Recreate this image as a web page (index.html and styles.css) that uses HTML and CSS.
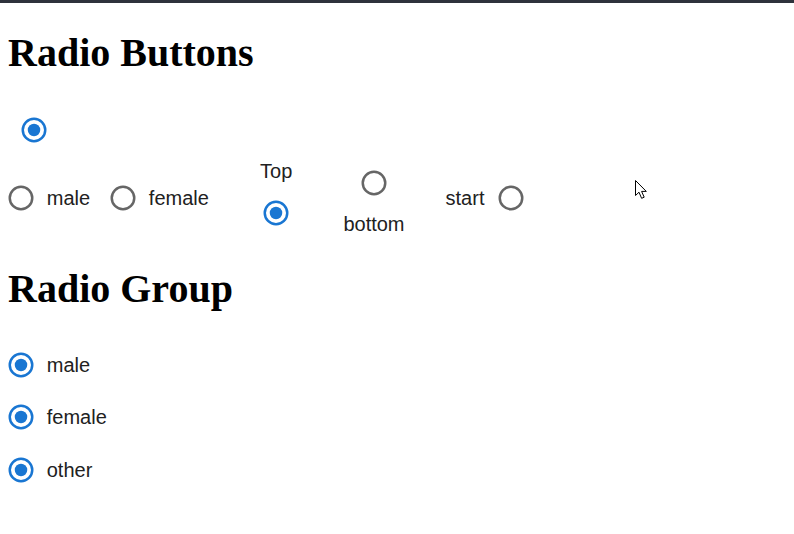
FILE: index.html
```html
<!DOCTYPE html>
<html lang="en">
<head>
<meta charset="utf-8">
<title>Radio Buttons</title>
<link rel="stylesheet" href="styles.css">
</head>
<body>
<h1 class="title">Radio Buttons</h1>
<div class="solo">
  <span class="radio checked"><svg viewBox="0 0 24 24"><circle class="ring" cx="12" cy="12" r="9"/><circle class="dot" cx="12" cy="12" r="5"/></svg></span>
</div>
<div class="group row">
  <label class="fcl"><span class="radio"><svg viewBox="0 0 24 24"><circle class="ring" cx="12" cy="12" r="9"/></svg></span><span class="lbl">male</span></label>
  <label class="fcl"><span class="radio"><svg viewBox="0 0 24 24"><circle class="ring" cx="12" cy="12" r="9"/></svg></span><span class="lbl">female</span></label>
  <label class="fcl top"><span class="radio checked"><svg viewBox="0 0 24 24"><circle class="ring" cx="12" cy="12" r="9"/><circle class="dot" cx="12" cy="12" r="5"/></svg></span><span class="lbl">Top</span></label>
  <label class="fcl bottom"><span class="radio"><svg viewBox="0 0 24 24"><circle class="ring" cx="12" cy="12" r="9"/></svg></span><span class="lbl">bottom</span></label>
  <label class="fcl start"><span class="radio"><svg viewBox="0 0 24 24"><circle class="ring" cx="12" cy="12" r="9"/></svg></span><span class="lbl">start</span></label>
</div>
<h1 class="title">Radio Group</h1>
<div class="group col">
  <label class="fcl"><span class="radio checked"><svg viewBox="0 0 24 24"><circle class="ring" cx="12" cy="12" r="9"/><circle class="dot" cx="12" cy="12" r="5"/></svg></span><span class="lbl">male</span></label>
  <label class="fcl"><span class="radio checked"><svg viewBox="0 0 24 24"><circle class="ring" cx="12" cy="12" r="9"/><circle class="dot" cx="12" cy="12" r="5"/></svg></span><span class="lbl">female</span></label>
  <label class="fcl"><span class="radio checked"><svg viewBox="0 0 24 24"><circle class="ring" cx="12" cy="12" r="9"/><circle class="dot" cx="12" cy="12" r="5"/></svg></span><span class="lbl">other</span></label>
</div>
<svg class="cursor" viewBox="0 0 13 20" width="13" height="20"><path d="M0.5 0.5 L0.5 15.5 L4 12.2 L6.6 18.3 L9.2 17.2 L6.6 11.4 L11.3 11.4 Z" fill="#fff" stroke="#000" stroke-width="1" stroke-linejoin="miter"/></svg>
</body>
</html>
```
FILE: styles.css
```css
html {
  border-top: 3px solid #2e323c;
  background: #fff;
}
body {
  margin: 0 8px 8px;
  font-family: "Liberation Sans", Arial, sans-serif;
  color: #212121;
}
.title {
  font-family: "Liberation Serif", "Times New Roman", serif;
  font-size: 40px;
  font-weight: bold;
  line-height: 46px;
  margin: 26.8px 0 28px;
  color: #000;
}
.title + .group {
  margin-top: -1px;
}
.solo {
  display: flex;
}
.group {
  display: flex;
}
.group.row {
  flex-direction: row;
  flex-wrap: wrap;
}
.group.col {
  flex-direction: column;
  align-items: flex-start;
}
.fcl {
  display: inline-flex;
  align-items: center;
  margin-left: -13.75px;
  margin-right: 20px;
  cursor: pointer;
}
.fcl.top {
  flex-direction: column-reverse;
  margin-left: 21px;
}
.fcl.bottom {
  flex-direction: column;
  margin-left: 21px;
}
.fcl.start {
  flex-direction: row-reverse;
  margin-left: 21px;
}
.radio {
  display: inline-flex;
  padding: 11.25px;
}
.radio svg {
  width: 30px;
  height: 30px;
  display: block;
}
.ring {
  fill: none;
  stroke: #666666;
  stroke-width: 2;
}
.checked .ring {
  stroke: #1976d2;
}
.dot {
  fill: #1976d2;
}
.lbl {
  font-size: 20px;
  line-height: 30px;
  color: #212121;
}
.cursor {
  position: absolute;
  left: 635px;
  top: 180px;
}
```
